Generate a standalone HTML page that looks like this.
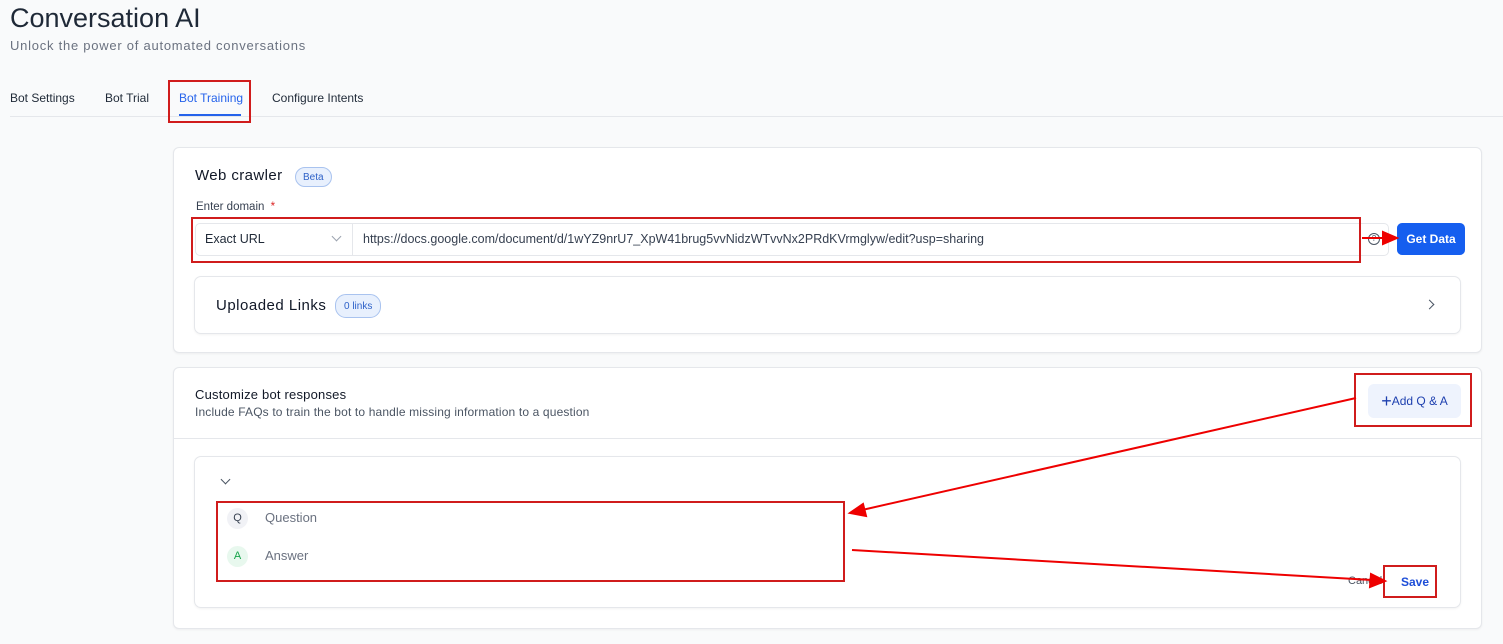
<!DOCTYPE html>
<html><head><meta charset="utf-8"><style>
*{box-sizing:border-box;margin:0;padding:0}
body{width:1503px;height:644px;background:#f9fafb;font-family:"Liberation Sans",sans-serif;position:relative;overflow:hidden;color:#1f2937}
.a{position:absolute}
.card{position:absolute;background:#fff;border:1px solid #e5e7eb;border-radius:6px;box-shadow:0 1px 2px rgba(0,0,0,.05)}
.red{position:absolute;border:2px solid #d01c1c}
.pill{display:inline-block;border:1px solid #a9c3ef;background:#e8f0fd;color:#2f62c8;border-radius:11px;font-size:10px;padding:4px 7px 3px}
</style></head><body>
<div class="a" style="left:10px;top:3px;font-size:27px;color:#1f2937">Conversation AI</div>
<div class="a" style="left:10px;top:38px;font-size:13px;letter-spacing:0.75px;color:#6b7280">Unlock the power of automated conversations</div>
<div class="a" style="left:10px;top:91px;font-size:12px;color:#1f2937">Bot Settings</div>
<div class="a" style="left:105px;top:91px;font-size:12px;color:#1f2937">Bot Trial</div>
<div class="a" style="left:179px;top:91px;font-size:12px;color:#2563eb">Bot Training</div>
<div class="a" style="left:179px;top:114px;width:62px;height:2px;background:#2563eb"></div>
<div class="a" style="left:272px;top:91px;font-size:12px;color:#1f2937">Configure Intents</div>
<div class="a" style="left:10px;top:116px;width:1493px;height:1px;background:#e5e7eb"></div>
<div class="red" style="left:168px;top:80px;width:83px;height:43px"></div>

<div class="card" style="left:173px;top:147px;width:1309px;height:206px"></div>
<div class="a" style="left:195px;top:167px;font-size:15px;letter-spacing:0.4px;color:#111827">Web crawler</div>
<div class="a" style="left:295px;top:167px"><span class="pill">Beta</span></div>
<div class="a" style="left:196px;top:201px;font-size:11.5px;color:#374151">Enter domain <span style="color:#dc2626;margin-left:3px">*</span></div>
<div class="a" style="left:195px;top:223px;width:1194px;height:33px;border:1px solid #e5e7eb;border-radius:5px;background:#fff"></div>
<div class="a" style="left:352px;top:223px;width:1px;height:33px;background:#e5e7eb"></div>
<div class="a" style="left:205px;top:232px;font-size:12.5px;color:#1f2937">Exact URL</div>
<div class="a" style="left:333px;top:233px;width:7px;height:7px;border-right:1px solid #9ca3af;border-bottom:1px solid #9ca3af;transform:rotate(45deg)"></div>
<div class="a" style="left:363px;top:232px;font-size:12.5px;color:#374151">https://docs.google.com/document/d/1wYZ9nrU7_XpW41brug5vvNidzWTvvNx2PRdKVrmglyw/edit?usp=sharing</div>
<div class="a" style="left:1368px;top:233px;width:12px;height:12px;border:1px solid #4b5563;border-radius:50%;font-size:8px;text-align:center;line-height:10px;color:#4b5563">?</div>
<div class="a" style="left:1397px;top:223px;width:68px;height:32px;background:#155eef;border-radius:5px;color:#fff;font-size:12px;font-weight:bold;text-align:center;line-height:33px">Get Data</div>
<div class="red" style="left:191px;top:217px;width:1170px;height:46px"></div>

<div class="card" style="left:194px;top:276px;width:1267px;height:58px;border-radius:7px"></div>
<div class="a" style="left:216px;top:297px;font-size:15px;letter-spacing:0.5px;color:#111827">Uploaded Links</div>
<div class="a" style="left:335px;top:294px"><span class="pill" style="padding:6px 8px 5px">0 links</span></div>
<div class="a" style="left:1426px;top:301px;width:7px;height:7px;border-right:1px solid #4b5563;border-top:1px solid #4b5563;transform:rotate(45deg)"></div>

<div class="card" style="left:173px;top:367px;width:1309px;height:262px"></div>
<div class="a" style="left:174px;top:438px;width:1307px;height:1px;background:#e5e7eb"></div>
<div class="a" style="left:195px;top:387px;font-size:13px;letter-spacing:0.2px;color:#111827">Customize bot responses</div>
<div class="a" style="left:195px;top:405px;font-size:12px;letter-spacing:0.15px;color:#4b5563">Include FAQs to train the bot to handle missing information to a question</div>
<div class="a" style="left:1368px;top:384px;width:93px;height:34px;background:#eef3fd;border-radius:6px;color:#1e40af;font-size:12px;line-height:34px;text-align:center"><span style="font-size:18px;vertical-align:-2px">+</span>Add Q &amp; A</div>
<div class="red" style="left:1354px;top:373px;width:118px;height:54px"></div>

<div class="card" style="left:194px;top:456px;width:1267px;height:152px;border-radius:7px"></div>
<div class="a" style="left:222px;top:476px;width:7px;height:7px;border-right:1px solid #4b5563;border-bottom:1px solid #4b5563;transform:rotate(45deg)"></div>
<div class="a" style="left:227px;top:508px;width:21px;height:21px;border-radius:50%;background:#f1f2f6;font-size:11px;text-align:center;line-height:21px;color:#374151">Q</div>
<div class="a" style="left:265px;top:510px;font-size:13px;color:#6b7280">Question</div>
<div class="a" style="left:227px;top:546px;width:21px;height:21px;border-radius:50%;background:#e8f8ee;font-size:11px;text-align:center;line-height:21px;color:#16a34a">A</div>
<div class="a" style="left:265px;top:548px;font-size:13px;color:#6b7280">Answer</div>
<div class="red" style="left:216px;top:501px;width:629px;height:81px"></div>
<div class="a" style="left:1348px;top:575px;font-size:11px;color:#4b5563">Cancel</div>
<div class="a" style="left:1401px;top:575px;font-size:12px;font-weight:bold;color:#1d4ed8">Save</div>
<div class="red" style="left:1383px;top:565px;width:54px;height:33px"></div>

<svg class="a" style="left:0;top:0" width="1503" height="644">
<g stroke="#e00" stroke-width="2" fill="#e00">
<line x1="1362" y1="238" x2="1385" y2="238"/><polygon points="1397,238 1383,232 1383,244"/>
<line x1="1356" y1="398" x2="862" y2="510"/><polygon points="850,513 863,504 866,516"/>
<line x1="852" y1="550" x2="1372" y2="580"/><polygon points="1385,581 1371,574 1370,587"/>
</g></svg>
</body></html>
